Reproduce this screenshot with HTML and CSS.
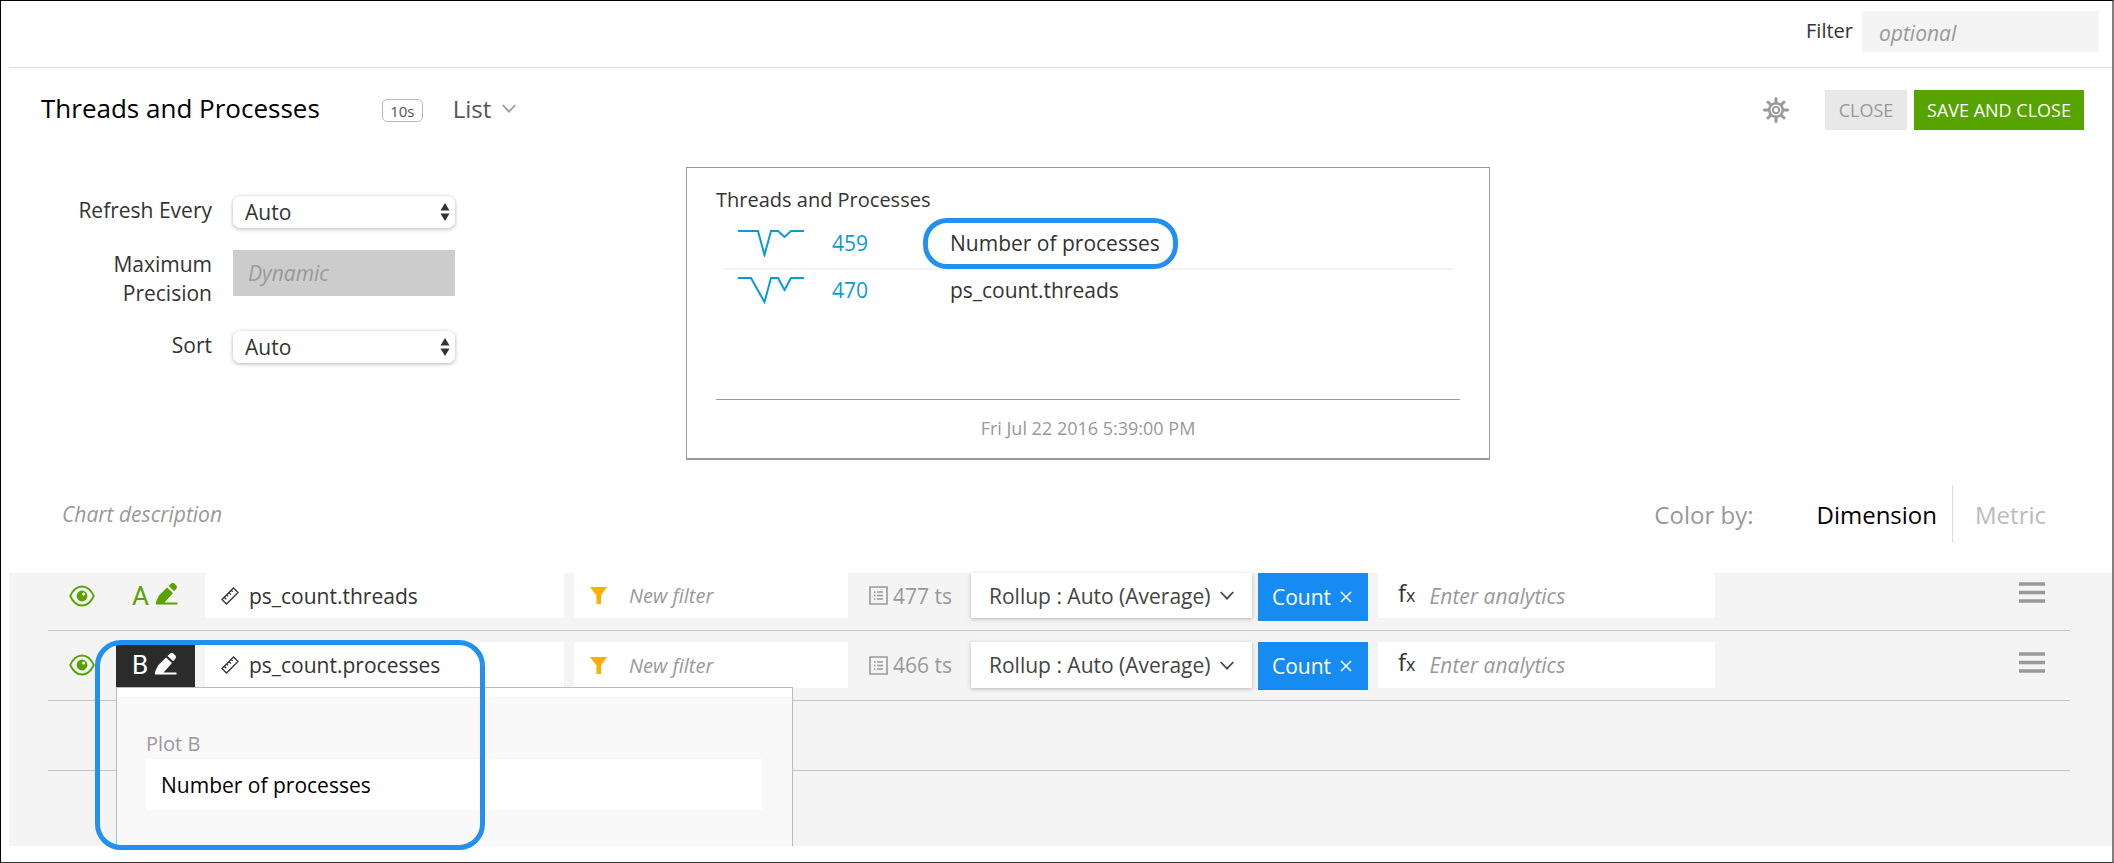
FILE: index.html
```html
<!DOCTYPE html>
<html lang="en">
<head>
<meta charset="utf-8">
<title>Threads and Processes</title>
<link rel="stylesheet" href="styles.css">
</head>
<body>
<svg class="sprite" aria-hidden="true">
  <symbol id="eye" viewBox="0 0 26 22"><path d="M1.200 11C4 5 8 1.500 13 1.500S22 5 24.800 11C22 17 18 20.500 13 20.500S4 17 1.200 11Z" fill="none" stroke="currentColor" stroke-width="1.800"/><circle cx="13" cy="11" r="5.400" fill="currentColor"/><circle cx="14.600" cy="9" r="1.500" fill="#fff"/></symbol>
  <symbol id="pencil" viewBox="0 0 22 22"><path d="M0 21.500V19L3 12.500 11 4.500l6 5.500-8.500 9.500H21.500V21.500Z" fill="currentColor"/><path d="M12.500 3 15 .7a2.500 2.500 0 0 1 3.500 0l1.700 1.600a2.500 2.500 0 0 1 0 3.400L18.300 8.300Z" fill="currentColor"/></symbol>
  <symbol id="ruler" viewBox="0 0 18 18"><path d="M1 12.500 12.500 1 17 5.500 5.500 17ZM3.300 10.200l2 2M5.600 7.900l1.500 1.500M7.900 5.600l2 2M10.200 3.300l1.500 1.500" fill="none" stroke="currentColor" stroke-width="1.300"/></symbol>
  <symbol id="funnel" viewBox="0 0 17 17"><path d="M0 0H17L11 8.500V17H6.500V8.500Z" fill="currentColor"/></symbol>
  <symbol id="list" viewBox="0 0 19 19"><path d="M1 1H18V18H1Z" fill="none" stroke="currentColor" stroke-width="1.600"/><path d="M5 6H6.500M8 6h6M5 9.500H6.500M8 9.500h6M5 13H6.500M8 13h6" stroke="currentColor" stroke-width="1.300"/></symbol>
  <symbol id="chevron" viewBox="0 0 14 9"><path d="M.7 1 7 7.700 13.300 1" fill="none" stroke="currentColor" stroke-width="1.700"/></symbol>
  <symbol id="menu" viewBox="0 0 26 21"><path d="M0 2H26M0 10.500H26M0 19H26" stroke="currentColor" stroke-width="3.500"/></symbol>
  <symbol id="cross" viewBox="0 0 12 12"><path d="M1 1 11 11M11 1 1 11" stroke="currentColor" stroke-width="1.500"/></symbol>
</svg>
<div class="page">
  <header class="topbar">
    <label for="filter">Filter</label>
    <input id="filter" class="top-filter" type="text" placeholder="optional">
  </header>

  <section class="heading">
    <h1>Threads and Processes</h1>
    <span class="badge">10s</span>
    <button class="kind" type="button">List <svg class="chev"><use href="#chevron"/></svg></button>
    <div class="actions">
      <button class="gear" type="button" aria-label="Settings">
        <svg viewBox="0 0 26 26"><g stroke="currentColor" stroke-width="3" stroke-linecap="round"><path d="M13 1.500V24.500M1.500 13H24.500M5 5 21 21M21 5 5 21"/></g><circle cx="13" cy="13" r="8" fill="currentColor"/><circle cx="13" cy="13" r="4.800" fill="none" stroke="#fff" stroke-width="1.400"/><circle cx="13" cy="13" r="2.200" fill="#fff"/></svg>
      </button>
      <button class="btn" type="button">CLOSE</button>
      <button class="btn btn-save" type="button">SAVE AND CLOSE</button>
    </div>
  </section>

  <section class="setup">
    <form class="options">
      <label for="refresh">Refresh Every</label>
      <div class="select"><select id="refresh"><option>Auto</option></select><svg class="updown" viewBox="0 0 10 18"><path d="M5 0 9.500 7.500H.5ZM5 18 .5 10.500h9Z" fill="currentColor"/></svg></div>
      <label for="precision">Maximum Precision</label>
      <input id="precision" type="text" placeholder="Dynamic" disabled>
      <label for="sort">Sort</label>
      <div class="select"><select id="sort"><option>Auto</option></select><svg class="updown" viewBox="0 0 10 18"><path d="M5 0 9.500 7.500H.5ZM5 18 .5 10.500h9Z" fill="currentColor"/></svg></div>
    </form>
    <article class="preview">
      <h2>Threads and Processes</h2>
      <ul class="readings">
        <li><svg class="spark" viewBox="0 0 66 28"><path d="M0 2H20L26.500 26 33 2H40L46.500 8 53 2H66"/></svg><b>459</b><span class="marked">Number of processes</span></li>
        <li><svg class="spark" viewBox="0 0 66 28"><path d="M0 2H13L26.500 26 33 2H40L46.500 14 53 2H66"/></svg><b>470</b><span>ps_count.threads</span></li>
      </ul>
      <time>Fri Jul 22 2016 5:39:00 PM</time>
    </article>
  </section>

  <section class="describe">
    <input class="description" type="text" placeholder="Chart description" aria-label="Chart description">
    <span class="colorby">Color by:</span>
    <button class="tab tab-on" type="button">Dimension</button>
    <button class="tab" type="button">Metric</button>
  </section>

  <section class="plots">
    <div class="row">
      <button class="eye" type="button" aria-label="Toggle plot A"><svg><use href="#eye"/></svg></button>
      <button class="letter" type="button">A <svg><use href="#pencil"/></svg></button>
      <div class="cell metric"><svg><use href="#ruler"/></svg><span>ps_count.threads</span></div>
      <div class="cell filter"><svg><use href="#funnel"/></svg><input type="text" placeholder="New filter" aria-label="New filter for A"></div>
      <span class="ts"><svg><use href="#list"/></svg>477 ts</span>
      <button class="cell rollup" type="button">Rollup : Auto (Average) <svg class="chev"><use href="#chevron"/></svg></button>
      <button class="count" type="button">Count <svg><use href="#cross"/></svg></button>
      <div class="cell analytics"><span class="fx">f<small>x</small></span><input type="text" placeholder="Enter analytics" aria-label="Analytics for A"></div>
      <button class="menu" type="button" aria-label="Plot A menu"><svg><use href="#menu"/></svg></button>
    </div>
    <div class="row">
      <button class="eye" type="button" aria-label="Toggle plot B"><svg><use href="#eye"/></svg></button>
      <button class="letter letter-open" type="button">B <svg><use href="#pencil"/></svg></button>
      <div class="cell metric"><svg><use href="#ruler"/></svg><span>ps_count.processes</span></div>
      <div class="cell filter"><svg><use href="#funnel"/></svg><input type="text" placeholder="New filter" aria-label="New filter for B"></div>
      <span class="ts"><svg><use href="#list"/></svg>466 ts</span>
      <button class="cell rollup" type="button">Rollup : Auto (Average) <svg class="chev"><use href="#chevron"/></svg></button>
      <button class="count" type="button">Count <svg><use href="#cross"/></svg></button>
      <div class="cell analytics"><span class="fx">f<small>x</small></span><input type="text" placeholder="Enter analytics" aria-label="Analytics for B"></div>
      <button class="menu" type="button" aria-label="Plot B menu"><svg><use href="#menu"/></svg></button>
    </div>
    <div class="row"></div>
    <div class="popup">
      <label for="plotname">Plot B</label>
      <input id="plotname" type="text" value="Number of processes">
    </div>
    <div class="callout"></div>
  </section>
</div>
</body>
</html>
```
FILE: styles.css
```css
* { box-sizing: border-box; }
body { margin: 0; background: #fff; }
body, button, input, select { font-family: "Open Sans", sans-serif; font-size: 21px; color: #333; }
button { border: 0; background: none; padding: 0; }
input { border: 0; outline: 0; background: none; padding: 0; min-width: 0; }
input::placeholder { color: #999; font-style: italic; opacity: 1; }
svg { display: block; flex: none; }
.sprite { position: absolute; width: 0; height: 0; }

.page { min-height: 100vh; border: 1px solid #000; border-right: 2px solid #808080; border-bottom-color: #333; padding-left: 8px; padding-bottom: 15px; }

.topbar { display: flex; justify-content: flex-end; align-items: center; gap: 9px; height: 67px; padding: 0 13px 5px 0; border-bottom: 1px solid #ddd; }
.topbar label { padding-bottom: 2px; font-size: 20px; }
.top-filter { width: 237px; height: 41px; background: #f4f4f4; padding: 2px 17px 0; }

.heading { display: flex; align-items: center; height: 84px; padding: 0 28px 0 32px; }
h1 { margin: 0; padding-bottom: 4px; font-size: 26px; font-weight: 400; color: #000; }
.badge { margin-left: 62px; width: 41px; height: 23px; border: 1px solid #bbb; border-radius: 5px; font-size: 15px; line-height: 22px; text-align: center; color: #555; }
.kind { display: flex; align-items: center; gap: 11px; margin-left: 30px; padding-bottom: 4px; font-size: 24px; color: #555; }
.chev { width: 14px; height: 9px; }
.kind .chev { color: #999; }
.actions { display: flex; align-items: center; gap: 7px; margin-left: auto; }
.gear { margin-right: 29px; color: #999; }
.gear svg { width: 26px; height: 26px; }
.btn { width: 82px; height: 40px; background: #e8e8e8; color: #999; font-size: 18px; }
.btn-save { width: 170px; background: #57a300; color: #fff; font-weight: 500; }

.setup { display: flex; align-items: flex-start; padding: 15px 0 0 67px; }
.options { display: grid; grid-template-columns: 136px 222px; column-gap: 21px; padding-top: 29px; text-align: right; line-height: 29px; }
.select { position: relative; height: 54px; }
.select select { width: 100%; height: 32px; padding: 0 12px; border: 0; border-radius: 7px; background: #fff; box-shadow: 0 1px 4px rgba(0, 0, 0, .3); appearance: none; }
.updown { position: absolute; right: 5px; top: 7px; width: 10px; height: 18px; pointer-events: none; }
.options > input { height: 46px; margin-bottom: 35px; padding: 0 15px; background: #ccc; }
.preview { display: flex; flex-direction: column; width: 804px; height: 293px; margin-left: 231px; padding: 16px 29px 0; border: 1px solid #999; border-bottom-width: 2px; }
.preview h2 { margin: 0; font-size: 20px; font-weight: 400; line-height: 32px; }
.readings { flex: 1; margin: 0; padding: 2px 7px 0 8px; list-style: none; border-bottom: 1px solid #999; }
.readings li { display: flex; align-items: center; height: 50px; }
.readings li + li { height: 42px; border-top: 2px solid #f2f2f2; }
.spark { width: 66px; height: 28px; margin-left: 14px; fill: none; stroke: #0a9bd6; stroke-width: 2; }
.readings b { width: 118px; margin-left: 28px; color: #0a9bd6; font-weight: 500; }
.marked { position: relative; }
.marked::after { content: ""; position: absolute; inset: -11px -18px -12px -27px; border: 5px solid #2190f0; border-radius: 24px; }
.preview time { height: 58px; line-height: 56px; font-size: 18px; text-align: center; color: #999; }

.describe { display: flex; align-items: center; height: 58px; margin: 25px 0 30px; padding: 0 46px 0 53px; font-size: 24px; }
.description { flex: 1; }
.colorby { margin-right: 48px; color: #999; }
.tab { height: 58px; padding: 0 15px; font-size: 24px; color: #bbb; }
.tab-on { color: #000; border-right: 1px solid #ddd; }
.tab:last-child { padding: 0 20px 0 22px; }

.plots { position: relative; height: 273px; background: #f4f4f4; padding: 0 42px 0 39px; }
.row { display: flex; align-items: flex-start; height: 70px; border-bottom: 1px solid #c4c4c4; padding-top: 11px; }
.row:first-child { height: 58px; padding-top: 0; }
.row > * { height: 46px; }
.row:first-child > * { height: 45px; }
.eye { width: 68px; padding-left: 21px; color: #57a300; }
.eye svg { width: 26px; height: 22px; }
.letter { display: flex; align-items: center; gap: 7px; width: 79px; padding-left: 16px; font-family: Roboto, sans-serif; font-size: 26px; color: #57a300; }
.letter svg { width: 22px; height: 22px; margin-bottom: 3px; }
.letter-open { background: #2b2b2b; color: #fff; }
.cell { display: flex; align-items: center; background: #fff; }
.metric { width: 359px; margin-left: 10px; padding-left: 16px; gap: 10px; }
.metric svg { width: 18px; height: 18px; }
.filter { width: 274px; margin-left: 10px; padding-left: 16px; gap: 22px; color: #ffae00; }
.filter svg { width: 17px; height: 17px; }
.filter input { flex: 1; font-size: 20px; }
.ts { display: flex; align-items: center; width: 102px; margin-left: 21px; gap: 5px; color: #999; }
.ts svg { width: 19px; height: 19px; }
.rollup { width: 281px; padding-left: 18px; gap: 10px; box-shadow: 0 1px 4px rgba(0, 0, 0, .25); color: #444; }
.row .count { display: flex; align-items: center; gap: 9px; width: 110px; height: 48px; margin-left: 6px; padding-left: 14px; background: #168cf3; color: #fff; font-weight: 500; }
.count svg { width: 12px; height: 12px; }
.analytics { width: 337px; margin-left: 10px; padding-left: 20px; gap: 14px; }
.fx { padding-bottom: 4px; font-size: 24px; line-height: 40px; }
.fx small { font-size: 18px; }
.menu { margin-left: auto; margin-right: 25px; color: #999; }
.menu svg { width: 26px; height: 21px; margin-bottom: 6px; }
.popup { position: absolute; left: 107px; top: 114px; bottom: 0; width: 677px; padding: 44px 30px 0 29px; background: #f9f9f9; border: 1px solid #bbb; border-bottom: 0; box-shadow: inset 0 9px #fff; }
.popup label { display: block; margin-bottom: 3px; font-size: 20px; color: #999; line-height: 24px; }
.popup input { width: 100%; height: 51px; background: #fff; padding: 0 15px; color: #000; }
.callout { position: absolute; left: 86px; top: 67px; width: 390px; height: 210px; border: 5px solid #2190f0; border-radius: 26px; pointer-events: none; }
```
